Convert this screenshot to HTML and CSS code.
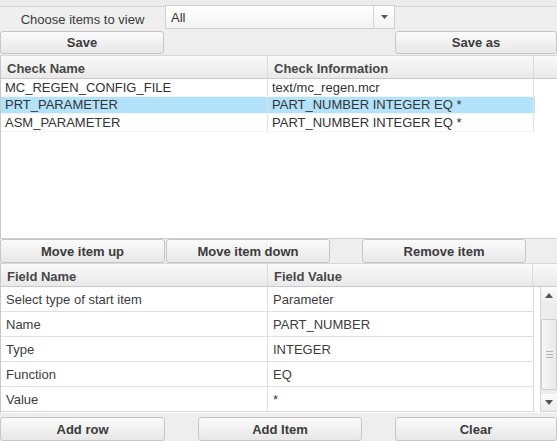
FILE: index.html
```html
<!DOCTYPE html>
<html>
<head>
<meta charset="utf-8">
<link rel="stylesheet" href="styles.css">
</head>
<body>
<div class="app">
  <div class="topstrip"></div>
  <div class="viewrow">
    <div class="viewlabel">Choose items to view</div>
    <div class="combo">
      <span class="combo-text">All</span>
      <span class="combo-arrow"><svg width="9" height="6" viewBox="0 0 9 6"><path d="M1 1h7L4.5 5z" fill="#555"/></svg></span>
    </div>
  </div>
  <div class="btnrow saverow">
    <button class="btn w164">Save</button>
    <div class="fill"></div>
    <button class="btn w162">Save as</button>
  </div>

  <div class="grid checks">
    <div class="ghead">
      <div class="hc c1">Check Name</div>
      <div class="hc c2">Check Information</div>
      <div class="hc c3"></div>
    </div>
    <div class="crow">
      <div class="cc c1">MC_REGEN_CONFIG_FILE</div>
      <div class="cc c2">text/mc_regen.mcr</div>
    </div>
    <div class="crow sel">
      <div class="cc c1">PRT_PARAMETER</div>
      <div class="cc c2">PART_NUMBER INTEGER EQ *</div>
    </div>
    <div class="crow">
      <div class="cc c1">ASM_PARAMETER</div>
      <div class="cc c2">PART_NUMBER INTEGER EQ *</div>
    </div>
  </div>

  <div class="btnrow moverow">
    <button class="btn w165">Move item up</button>
    <button class="btn w164 ml1">Move item down</button>
    <div class="gap32"></div>
    <button class="btn w164">Remove item</button>
    <div class="fill"></div>
  </div>

  <div class="grid fields">
    <div class="ghead">
      <div class="hc c1">Field Name</div>
      <div class="hc c2f">Field Value</div>
      <div class="hc c3"></div>
    </div>
    <div class="fbody">
      <div class="frows">
        <div class="frow"><div class="fc c1">Select type of start item</div><div class="fc c2f">Parameter</div></div>
        <div class="frow"><div class="fc c1">Name</div><div class="fc c2f">PART_NUMBER</div></div>
        <div class="frow"><div class="fc c1">Type</div><div class="fc c2f">INTEGER</div></div>
        <div class="frow"><div class="fc c1">Function</div><div class="fc c2f">EQ</div></div>
        <div class="frow"><div class="fc c1">Value</div><div class="fc c2f">*</div></div>
      </div>
      <div class="vscroll">
        <div class="sb-btn"><svg width="8" height="5" viewBox="0 0 8 5"><path d="M0 5L4 0l4 5z" fill="#555"/></svg></div>
        <div class="sb-track">
          <div class="sb-thumb">
            <span class="grip"></span><span class="grip"></span><span class="grip"></span>
          </div>
        </div>
        <div class="sb-btn"><svg width="8" height="5" viewBox="0 0 8 5"><path d="M0 0h8L4 5z" fill="#555"/></svg></div>
      </div>
    </div>
  </div>

  <div class="btnrow bottomrow">
    <button class="btn w165">Add row</button>
    <div class="gap33"></div>
    <button class="btn w164">Add Item</button>
    <div class="gap33"></div>
    <button class="btn grow">Clear</button>
  </div>
</div>
</body>
</html>
```

FILE: styles.css
```css
* { box-sizing: border-box; }

html, body {
  margin: 0;
  padding: 0;
  background: #eeeeee;
}

.app {
  width: 557px;
  height: 441px;
  overflow: hidden;
  font-family: "Liberation Sans", Arial, sans-serif;
  font-size: 13px;
  color: #333;
  background: #eeeeee;
  display: flex;
  flex-direction: column;
}

.topstrip {
  height: 7px;
  background: #ececec;
  border-bottom: 1px solid #d4d4d4;
}

.viewrow {
  height: 23px;
  display: flex;
  align-items: stretch;
  background: #efefef;
}

.viewlabel {
  width: 165px;
  display: flex;
  align-items: center;
  justify-content: center;
  color: #3a3a3a;
  padding-top: 1px;
}

.combo {
  width: 230px;
  margin-top: -2px;
  height: 24px;
  border: 1px solid #cfcfcf;
  background: linear-gradient(#ffffff, #f3f3f3);
  display: flex;
  align-items: center;
}

.combo-text {
  flex: 1;
  padding-left: 5px;
  color: #333;
}

.combo-arrow {
  width: 21px;
  height: 100%;
  border-left: 1px solid #d6d6d6;
  display: flex;
  align-items: center;
  justify-content: center;
}

.btnrow {
  display: flex;
  align-items: stretch;
  background: #eeeeee;
}

.saverow { height: 23px; margin-top: 1px; }
.moverow { height: 25px; border-top: 1px solid #cfcfcf; }
.bottomrow { height: 24px; margin-top: 4px; }

.btn {
  font-family: "Liberation Sans", Arial, sans-serif;
  font-size: 13px;
  font-weight: bold;
  color: #3b3b3b;
  background: linear-gradient(#fbfbfb, #e7e7e7);
  border: 1px solid #c6c6c6;
  border-radius: 3px;
  padding: 0;
  margin: 0;
  line-height: 1;
}

.w162 { width: 162px; }
.w164 { width: 164px; }
.w165 { width: 165px; }
.ml1 { margin-left: 1px; }
.grow { flex: 1; }
.fill { flex: 1; }
.gap32 { width: 32px; }
.gap33 { width: 33px; }

.grid {
  background: #ffffff;
  border-left: 1px solid #c8c8c8;
}

.checks {
  height: 183px;
  margin-top: 1px;
}

.ghead {
  height: 24px;
  display: flex;
  background: linear-gradient(#fafafa, #e9e9e9);
  border-top: 1px solid #d8d8d8;
  border-bottom: 1px solid #c9c9c9;
}

.hc {
  font-weight: bold;
  color: #474747;
  padding-left: 6px;
  display: flex;
  align-items: center;
  padding-top: 2px;
}

.c1 { width: 267px; border-right: 1px solid #dadada; }
.c2 { width: 266px; border-right: 1px solid #dadada; }
.c2f { width: 265px; border-right: 1px solid #dadada; }
.c3 { flex: 1; }

.crow {
  height: 17.5px;
  display: flex;
  width: 534px;
  border-bottom: 1px solid #f4f4f4;
}

.crow.sel {
  background: #b3e3fa;
}

.cc {
  padding-left: 4px;
  display: flex;
  align-items: center;
  color: #333;
  white-space: nowrap;
}

.crow .c1 { border-right: 1px solid #e2e2e2; }
.crow .c2 { border-right: 1px solid #e2e2e2; }

.fields {
  height: 150px;
}

.fbody {
  display: flex;
  height: 125px;
}

.frows {
  width: 533px;
  border-right: 1px solid #d8d8d8;
  border-bottom: 1px solid #d8d8d8;
}

.frow {
  height: 25px;
  display: flex;
  border-bottom: 1px solid #e0e0e0;
}

.frow:last-child { border-bottom: none; height: 24px; }

.fc {
  padding-left: 5px;
  display: flex;
  align-items: center;
  color: #3d3d3d;
  white-space: nowrap;
}

.frow .c1 { border-right: 1px solid #e0e0e0; }
.frow .c2f { border-right: none; }

.vscroll {
  margin-left: 6px;
  flex: 1;
  display: flex;
  flex-direction: column;
  background: #ececec;
  border-left: 1px solid #d4d4d4;
  border-bottom: 1px solid #d4d4d4;
}

.sb-btn {
  height: 17px;
  display: flex;
  align-items: center;
  justify-content: center;
  background: linear-gradient(#fbfbfb, #ececec);
}

.sb-track {
  flex: 1;
  padding: 15px 0 4px;
  display: flex;
}

.sb-thumb {
  flex: 1;
  background: linear-gradient(90deg, #f7f7f7, #e9e9e9);
  border: 1px solid #cdcdcd;
  border-radius: 2px;
  display: flex;
  flex-direction: column;
  align-items: center;
  justify-content: center;
  gap: 2px;
}

.grip {
  width: 7px;
  height: 1px;
  background: #b5b5b5;
}
```
